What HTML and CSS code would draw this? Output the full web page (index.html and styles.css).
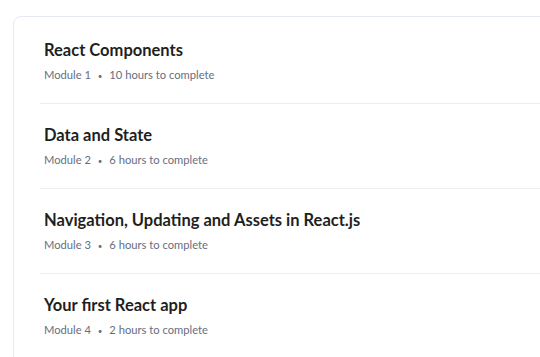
FILE: index.html
```html
<!DOCTYPE html>
<html lang="en">

<head>
  <meta charset="UTF-8">
  <meta name="viewport" content="width=device-width, initial-scale=1.0">
  <title>Course Modules</title>
  <link rel="stylesheet" href="styles.css">
</head>

<body>
  <div class="card">
    <ul class="modules">
      <li class="module">
        <div class="title">React Components</div>
        <div class="meta">Module 1 <span class="dot">•</span> 10 hours to complete</div>
      </li>
      <li class="module">
        <div class="title">Data and State</div>
        <div class="meta">Module 2 <span class="dot">•</span> 6 hours to complete</div>
      </li>
      <li class="module">
        <div class="title">Navigation, Updating and Assets in React.js</div>
        <div class="meta">Module 3 <span class="dot">•</span> 6 hours to complete</div>
      </li>
      <li class="module">
        <div class="title">Your first React app</div>
        <div class="meta">Module 4 <span class="dot">•</span> 2 hours to complete</div>
      </li>
    </ul>
  </div>
</body>

</html>
```

FILE: styles.css
```css
body {
  margin: 0;
  padding: 16px 0 0 13px;
  font-family: Lato, "Open Sans", sans-serif;
  background: white;
  overflow: hidden;
  height: 357px;
  box-sizing: border-box;
}

.card {
  width: 620px;
  border: 1px solid #e6eaf3;
  border-radius: 8px;
  padding: 2px 0 0 26px;
  background: white;
}

.modules {
  list-style: none;
  margin: 0;
  padding: 0;
}

.module {
  padding: 19px 4px 18px;
  border-bottom: 1px solid #ececf1;
}

.module:last-child {
  border-bottom: none;
  padding-bottom: 40px;
}

.title {
  font-size: 16.5px;
  font-weight: bold;
  line-height: 24px;
  color: #1f1f1f;
}

.meta {
  margin-top: 4px;
  font-size: 11.2px;
  line-height: 18px;
  color: #676e7e;
}

.dot {
  margin: 0 4px;
  font-size: 8px;
}
```
